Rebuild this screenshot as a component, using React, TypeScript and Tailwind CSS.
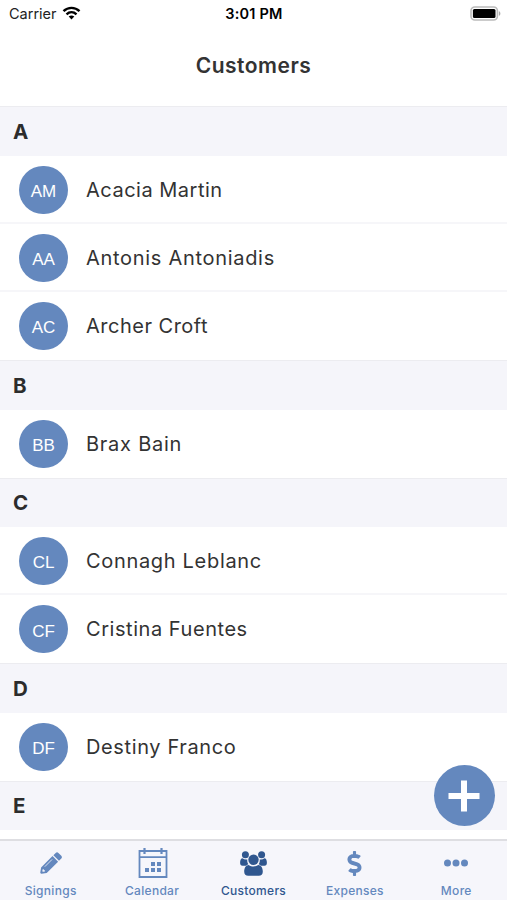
import React from "react";
import { FaDollarSign } from "react-icons/fa";

interface Customer {
	initials: string;
	name: string;
	tracking: string;
}

interface Section {
	letter: string;
	customers: Customer[];
}

const SECTIONS: Section[] = [
	{
		letter: "A",
		customers: [
			{ initials: "AM", name: "Acacia Martin", tracking: "tracking-[0.5px]" },
			{ initials: "AA", name: "Antonis Antoniadis", tracking: "tracking-[0.7px]" },
			{ initials: "AC", name: "Archer Croft", tracking: "tracking-[0.5px]" },
		],
	},
	{ letter: "B", customers: [{ initials: "BB", name: "Brax Bain", tracking: "tracking-[0.75px]" }] },
	{
		letter: "C",
		customers: [
			{ initials: "CL", name: "Connagh Leblanc", tracking: "tracking-[0.68px]" },
			{ initials: "CF", name: "Cristina Fuentes", tracking: "tracking-[0.55px]" },
		],
	},
	{ letter: "D", customers: [{ initials: "DF", name: "Destiny Franco", tracking: "tracking-[0.62px]" }] },
	{ letter: "E", customers: [] },
];

function PencilIcon(): React.ReactElement {
	return (
		<svg width="22" height="22" viewBox="0 0 22 22">
			<g fill="currentColor">
				<path d="M13.4 3.200l2.300-2.300c.8-.8 1.900-.8 2.700 0l2.900 2.900c.8.8.8 1.900 0 2.700L19 8.800z" />
				<path d="M12.500 4.100l5.600 5.600L6.700 21l-5.200.7c-.7.1-1.300-.4-1.200-1.100l.8-5.100z" />
			</g>
			<path d="M4.800 14.700l7.300-7.300" stroke="#f6f6fb" strokeWidth=".8" />
			<path d="M2.700 17.200l-.4 2 .6.600 2-.4v-1.200H3.800v-1z" fill="#f6f6fb" />
		</svg>
	);
}

function CalendarIcon(): React.ReactElement {
	return (
		<svg
			className="ml-px"
			width="30"
			height="32"
			viewBox="0 0 30 32"
			fill="none"
			stroke="currentColor"
			strokeWidth="1.800"
		>
			<path d="M1.500 4h27v26h-27zM1.500 10.200h27" />
			<path d="M6.500 1v6M23.500 1v6" strokeWidth="2.200" />
			<path
				d="M13 15h4v4h-4zM19 15h4v4h-4zM7 21h4v4H7zM13 21h4v4h-4zM19 21h4v4h-4z"
				fill="currentColor"
				stroke="none"
			/>
		</svg>
	);
}

function PeopleIcon(): React.ReactElement {
	return (
		<svg width="27" height="25" viewBox="0 0 27 25" fill="currentColor">
			<circle cx="5.400" cy="3.800" r="3.500" />
			<circle cx="21.600" cy="3.800" r="3.500" />
			<path d="M2.600 7.300C1 7.400.1 9 .1 11.800c0 1.900.8 2.900 2.500 2.900h3.600c.8-.7 1.400-1.100 2.200-1.400-1-1.500-1.400-3-1.100-4.900-1.800.3-3.400 0-4.700-1.100z" />
			<path d="M24.400 7.300c1.600.1 2.500 1.700 2.500 4.500 0 1.900-.8 2.900-2.500 2.900h-3.600c-.8-.7-1.400-1.100-2.200-1.400 1-1.500 1.400-3 1.100-4.900 1.800.3 3.400 0 4.700-1.100z" />
			<circle cx="13.500" cy="8.700" r="5.200" />
			<path d="M8.700 14c2.900 2 6.700 2 9.600 0 3 .3 4.500 3 4.500 6.700 0 2.700-1.600 4.100-4 4.100H8.200c-2.400 0-4-1.400-4-4.100 0-3.700 1.500-6.400 4.500-6.700z" />
		</svg>
	);
}

function MoreIcon(): React.ReactElement {
	return (
		<svg width="24" height="8" viewBox="0 0 24 8" fill="currentColor">
			<circle cx="3.500" cy="4" r="3.500" />
			<circle cx="12" cy="4" r="3.500" />
			<circle cx="20.500" cy="4" r="3.500" />
		</svg>
	);
}

const TABS = [
	{ label: "Signings", icon: <PencilIcon /> },
	{ label: "Calendar", icon: <CalendarIcon /> },
	{ label: "Customers", icon: <PeopleIcon />, active: true },
	{ label: "Expenses", icon: <FaDollarSign size={25} /> },
	{ label: "More", icon: <MoreIcon /> },
];

function StatusBar(): React.ReactElement {
	return (
		<div className="grid h-7 shrink-0 grid-cols-3 items-center pl-[9px] pr-[6px] text-[14.5px] text-[#222]">
			<div className="flex items-center gap-[5px]">
				<span>Carrier</span>
				<svg
					className="-mt-0.5"
					width="19"
					height="14"
					viewBox="0 0 18 14"
					fill="none"
					stroke="#000"
					strokeWidth="2.400"
				>
					<path d="M1 5.200C5.600.7 12.400.7 17 5.200M4 8.400c3-2.800 7-2.800 10 0" />
					<path d="M6.200 10.600c1.700-1.400 3.900-1.400 5.600 0L9 13.500z" fill="#000" stroke="none" />
				</svg>
			</div>
			<div className="pr-0.5 text-center font-semibold tracking-[0.2px] text-black">3:01 PM</div>
			<div className="-mt-0.5 flex justify-end">
				<svg width="31" height="15" viewBox="0 0 31 15">
					<rect x="1" y="1" width="26.400" height="13" rx="3.800" fill="#fff" stroke="#bbb" strokeWidth="1.600" />
					<rect x="2.900" y="2.900" width="22.600" height="9.200" rx="1.500" fill="#000" />
					<path d="M28.900 5.200c2 .7 2 3.900 0 4.600z" fill="#aaa" />
				</svg>
			</div>
		</div>
	);
}

function CustomerRow({ customer, divided }: { customer: Customer; divided: boolean }): React.ReactElement {
	return (
		<div
			className={`flex h-[68.2px] items-center gap-[18px] pl-[19px] ${divided ? "shadow-[0_-1px_0_1px_#f6f6f9]" : ""}`}
		>
			<div className="flex h-[48px] w-[49px] items-center justify-center rounded-full bg-[#6488be] pt-1 font-['Liberation_Sans',sans-serif] text-[17px] text-white">
				{customer.initials}
			</div>
			<span className={`text-[20px] text-[#333] ${customer.tracking}`}>{customer.name}</span>
		</div>
	);
}

export default function App(): React.ReactElement {
	return (
		<div className="relative flex h-[900px] w-full flex-col overflow-hidden bg-white font-['Inter',sans-serif]">
			<StatusBar />
			<header className="flex h-[78.4px] shrink-0 items-center justify-center pb-[3px] text-[21px] font-semibold tracking-[0.5px] text-[#333]">
				Customers
			</header>

			<main className="min-h-0 flex-1 overflow-hidden">
				{SECTIONS.map(section => (
					<section key={section.letter}>
						<h2 className="flex h-[49.3px] items-center border-t border-[#ececf0] bg-[#f5f5fa] pl-[13px] pt-px text-[20.5px] font-bold text-[#2c2c2c]">
							{section.letter}
						</h2>
						{section.customers.map((customer, i) => (
							<CustomerRow key={customer.name} customer={customer} divided={i > 0} />
						))}
					</section>
				))}
			</main>

			<button
				aria-label="Add customer"
				className="absolute right-[12.5px] top-[765px] flex size-[61px] items-center justify-center rounded-full bg-[#6488be]"
			>
				<svg width="32" height="32" viewBox="0 0 32 32" stroke="#fff" strokeWidth="6">
					<path d="M16 .5v31M.5 16h31" />
				</svg>
			</button>

			<nav className="grid h-[61px] shrink-0 grid-cols-5 border-t-2 border-[#dedee2] bg-[#f6f6fb]">
				{TABS.map(tab => (
					<div
						key={tab.label}
						className={`flex flex-col items-center ${tab.active ? "text-[#30578f]" : "text-[#6488be]"}`}
					>
						<div className="flex h-[44px] items-center">{tab.icon}</div>
						<span className="text-[12px] font-medium leading-[12px] tracking-[0.3px]">{tab.label}</span>
					</div>
				))}
			</nav>
		</div>
	);
}
